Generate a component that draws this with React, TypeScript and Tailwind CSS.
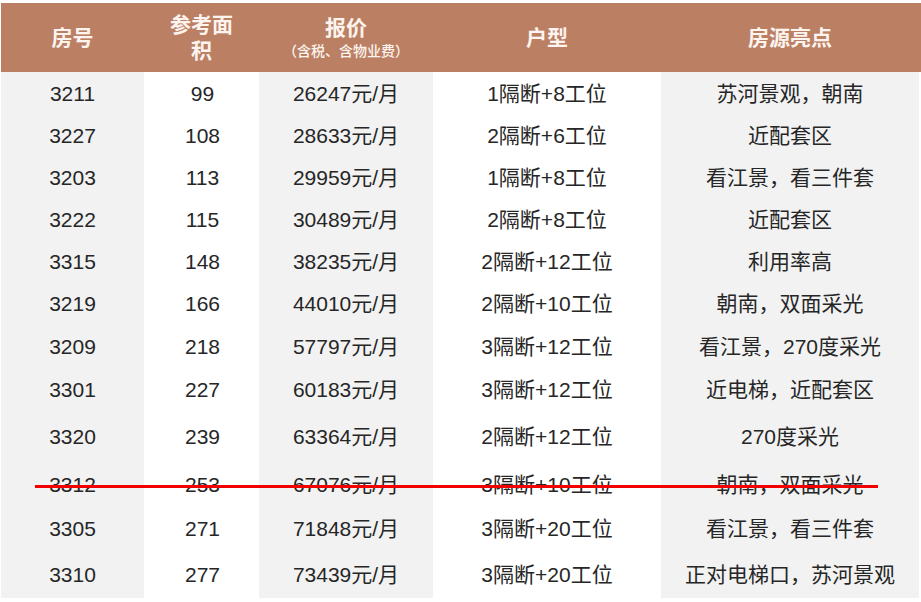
const rows = [
  { no: "3211", area: "99", price: "26247元/月", layout: "1隔断+8工位", note: "苏河景观，朝南", h: "h-[43px]" },
  { no: "3227", area: "108", price: "28633元/月", layout: "2隔断+6工位", note: "近配套区", h: "h-[42px]" },
  { no: "3203", area: "113", price: "29959元/月", layout: "1隔断+8工位", note: "看江景，看三件套", h: "h-[42px]" },
  { no: "3222", area: "115", price: "30489元/月", layout: "2隔断+8工位", note: "近配套区", h: "h-[42px]" },
  { no: "3315", area: "148", price: "38235元/月", layout: "2隔断+12工位", note: "利用率高", h: "h-[42px]" },
  { no: "3219", area: "166", price: "44010元/月", layout: "2隔断+10工位", note: "朝南，双面采光", h: "h-[42px]" },
  { no: "3209", area: "218", price: "57797元/月", layout: "3隔断+12工位", note: "看江景，270度采光", h: "h-[43px]" },
  { no: "3301", area: "227", price: "60183元/月", layout: "3隔断+12工位", note: "近电梯，近配套区", h: "h-[44px]" },
  { no: "3320", area: "239", price: "63364元/月", layout: "2隔断+12工位", note: "270度采光", h: "h-[50px]" },
  { no: "3312", area: "253", price: "67076元/月", layout: "3隔断+10工位", note: "朝南，双面采光", h: "h-[45px]" },
  { no: "3305", area: "271", price: "71848元/月", layout: "3隔断+20工位", note: "看江景，看三件套", h: "h-[44px]" },
  { no: "3310", area: "277", price: "73439元/月", layout: "3隔断+20工位", note: "正对电梯口，苏河景观", h: "h-[51px] pb-[4px]" },
];

// column widths: 143 / 115 / 174 / 228 / 258
const cols = "grid grid-cols-[143px_115px_174px_228px_258px]";

export default function App() {
  return (
    <div
      className="relative h-[602px] w-[921px] overflow-hidden bg-white pl-[1px] pt-[3px]"
      style={{ fontFamily: '"Liberation Sans", Arial, "Noto Sans CJK SC", sans-serif' }}
    >
      {/* header */}
      <div className={`${cols} h-[69px] items-center bg-[#bb8064] text-center text-[21px] font-bold text-[#fdf4ef]`}>
        <div>房号</div>
        <div className="leading-[26px]">
          参考面
          <br />
          积
        </div>
        <div className="flex flex-col items-center">
          <span className="leading-[26px]">报价</span>
          <span className="text-[14px] font-medium leading-[20px]">（含税、含物业费）</span>
        </div>
        <div>户型</div>
        <div>房源亮点</div>
      </div>

      {/* body */}
      <div className="text-center text-[21px] text-[#262626]">
        {rows.map((r) => (
          <div key={r.no} className={`${cols} ${r.h}`}>
            <div className="flex items-center justify-center bg-[#f2f2f2]">{r.no}</div>
            <div className="flex items-center justify-center pl-[2px]">{r.area}</div>
            <div className="flex items-center justify-center bg-[#f2f2f2]">{r.price}</div>
            <div className="flex items-center justify-center">{r.layout}</div>
            <div className="flex items-center justify-center bg-[#f2f2f2]">{r.note}</div>
          </div>
        ))}
      </div>

      {/* strike-through drawn over row 3312 */}
      <div className="absolute left-[35px] top-[485px] h-[3px] w-[843px] bg-[#f20000]" />
    </div>
  );
}
